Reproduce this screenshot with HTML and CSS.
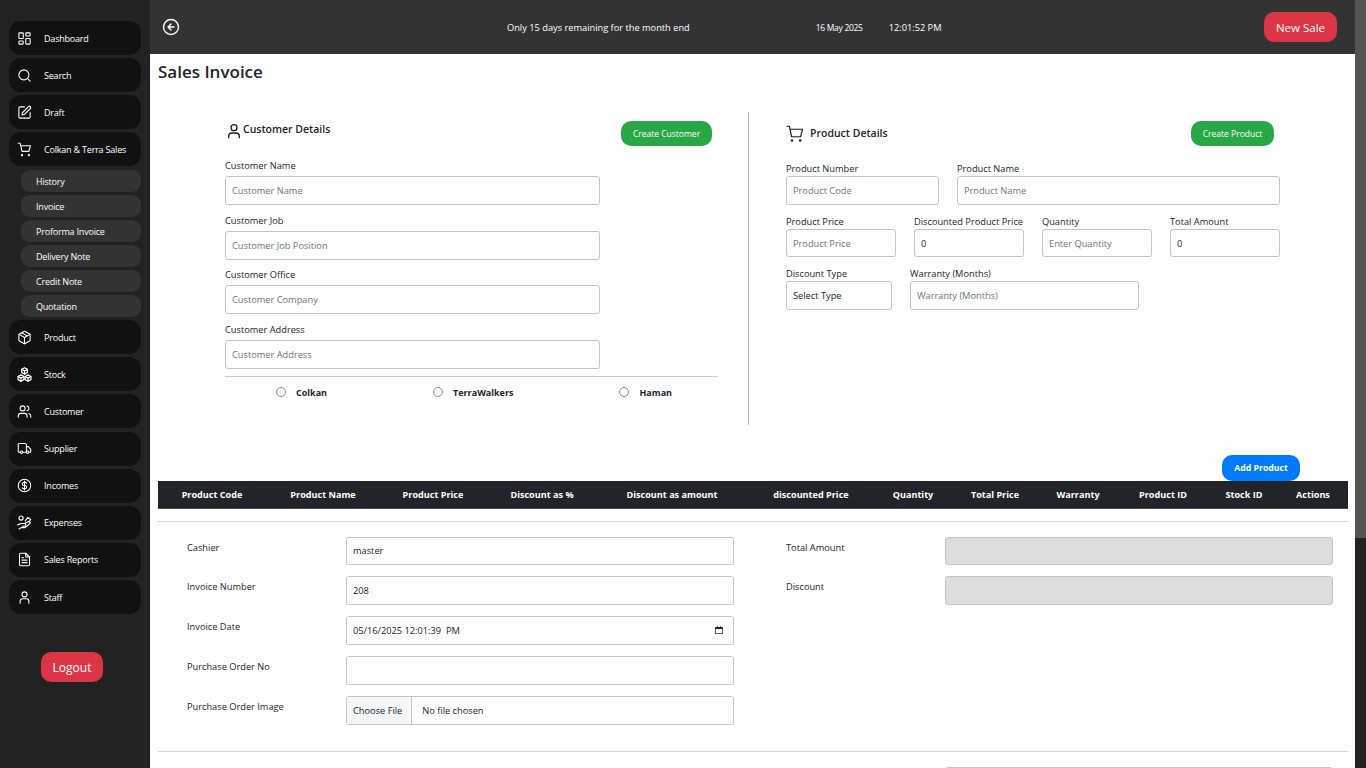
FILE: index.html
```html
<!DOCTYPE html>
<html lang="en">
<head>
    <meta charset="UTF-8">
    <meta name="viewport" content="width=device-width, initial-scale=1.0">
    <title>Sales Invoice</title>
    <link rel="stylesheet" href="styles.css">
</head>
<body>
    <div class="app">
        <aside class="sidebar">
            <nav class="menu">
                <a class="menu-item"><svg class="icon" viewBox="0 0 24 24"><rect x="3" y="3" width="7" height="9" rx="1"/><rect x="14" y="3" width="7" height="5" rx="1"/><rect x="14" y="12" width="7" height="9" rx="1"/><rect x="3" y="16" width="7" height="5" rx="1"/></svg>Dashboard</a>
                <a class="menu-item"><svg class="icon" viewBox="0 0 24 24"><circle cx="11" cy="11" r="8"/><path d="M21 21l-4.300-4.300"/></svg>Search</a>
                <a class="menu-item"><svg class="icon" viewBox="0 0 24 24"><path d="M12 3H5a2 2 0 0 0-2 2v14a2 2 0 0 0 2 2h14a2 2 0 0 0 2-2v-7"/><path d="M18.400 2.600a2.100 2.100 0 0 1 3 3L12 15l-4 1 1-4z"/></svg>Draft</a>
                <a class="menu-item"><svg class="icon" viewBox="0 0 24 24"><circle cx="8" cy="21" r="1"/><circle cx="19" cy="21" r="1"/><path d="M2 2h3l3 13h11l2.500-9H6"/></svg>Colkan &amp; Terra Sales</a>
                <div class="submenu">
                    <a class="submenu-item">History</a>
                    <a class="submenu-item">Invoice</a>
                    <a class="submenu-item">Proforma Invoice</a>
                    <a class="submenu-item">Delivery Note</a>
                    <a class="submenu-item">Credit Note</a>
                    <a class="submenu-item">Quotation</a>
                </div>
                <a class="menu-item"><svg class="icon" viewBox="0 0 24 24"><path d="M21 8a2 2 0 0 0-1-1.700l-7-4a2 2 0 0 0-2 0l-7 4A2 2 0 0 0 3 8v8a2 2 0 0 0 1 1.700l7 4a2 2 0 0 0 2 0l7-4a2 2 0 0 0 1-1.700z"/><path d="M3.300 7L12 12l8.700-5M12 22V12M7.500 4.300l9 5.200"/></svg>Product</a>
                <a class="menu-item"><svg class="icon" viewBox="2 1 20 21"><path d="M12 2l4 2.300v4.400L12 11 8 8.700V4.300zM7 12l4 2.300v4.400L7 21l-4-2.300v-4.400zM17 12l4 2.300v4.400L17 21l-4-2.300v-4.400z"/><path d="M8 4.300l4 2.300 4-2.300M12 6.600V11M3 14.300l4 2.300 4-2.300M7 16.600V21M13 14.300l4 2.300 4-2.300M17 16.600V21"/></svg>Stock</a>
                <a class="menu-item"><svg class="icon" viewBox="0 0 24 24"><circle cx="9" cy="7" r="4"/><path d="M2 21v-2a4 4 0 0 1 4-4h6a4 4 0 0 1 4 4v2M16 3.100a4 4 0 0 1 0 7.800M22 21v-2a4 4 0 0 0-3-3.900"/></svg>Customer</a>
                <a class="menu-item"><svg class="icon" viewBox="0 0 24 24"><path d="M5 18H3a1 1 0 0 1-1-1V6a2 2 0 0 1 2-2h9a2 2 0 0 1 2 2v12M9 18h6M15 9h3l4 4.500V17a1 1 0 0 1-1 1h-2"/><circle cx="7" cy="18" r="2"/><circle cx="17" cy="18" r="2"/></svg>Supplier</a>
                <a class="menu-item"><svg class="icon" viewBox="0 0 24 24"><circle cx="12" cy="12" r="10"/><path d="M15.500 8.500A2.500 2.500 0 0 0 13 7h-2a2.500 2.500 0 0 0 0 5h2a2.500 2.500 0 0 1 0 5h-2a2.500 2.500 0 0 1-2.500-1.500M12 5v14"/></svg>Incomes</a>
                <a class="menu-item"><svg class="icon" viewBox="1 1 22 21"><circle cx="7" cy="5" r="3"/><path d="M2 15l5-2h5a2 2 0 0 1 0 4H9M12 13l6-3a2 2 0 0 1 2 3l-7 6H7l-3 2"/><path d="M13 9l4-5 4 3-2 3"/></svg>Expenses</a>
                <a class="menu-item"><svg class="icon" viewBox="0 0 24 24"><path d="M14 2H6a2 2 0 0 0-2 2v16a2 2 0 0 0 2 2h12a2 2 0 0 0 2-2V8z"/><path d="M14 2v6h6M8 13h8M8 17h8M8 9h2"/></svg>Sales Reports</a>
                <a class="menu-item"><svg class="icon" viewBox="0 0 24 24"><circle cx="12" cy="7" r="4"/><path d="M5 21v-3a4 4 0 0 1 4-4h6a4 4 0 0 1 4 4v3"/></svg>Staff</a>
            </nav>
            <button class="logout-btn" type="button">Logout</button>
        </aside>

        <main class="main">
            <header class="topbar">
                <svg class="back-icon" viewBox="0 0 24 24"><circle cx="12" cy="12" r="10"/><path d="M12 8l-4 4 4 4M16 12H8"/></svg>
                <span class="notice">Only 15 days remaining for the month end</span>
                <span class="date">16 May 2025</span>
                <span class="time">12:01:52 PM</span>
                <button class="new-sale-btn" type="button">New Sale</button>
            </header>

            <div class="page">
                <h1>Sales Invoice</h1>

                <div class="details">
                    <section class="customer">
                        <div class="customer-head">
                            <h2 class="customer-title"><svg class="head-icon" viewBox="0 0 24 24"><circle cx="12" cy="7" r="4.500"/><path d="M4 23v-3a5 5 0 0 1 5-5h6a5 5 0 0 1 5 5v3"/></svg>Customer Details</h2>
                            <button class="btn-green create-customer" type="button">Create Customer</button>
                        </div>
                        <div class="field-list">
                            <div class="field"><label>Customer Name</label><input type="text" placeholder="Customer Name"></div>
                            <div class="field"><label>Customer Job</label><input type="text" placeholder="Customer Job Position"></div>
                            <div class="field"><label>Customer Office</label><input type="text" placeholder="Customer Company"></div>
                            <div class="field"><label>Customer Address</label><input type="text" placeholder="Customer Address"></div>
                        </div>
                        <hr class="customer-line">
                        <div class="radio-row">
                            <label class="radio radio-colkan"><input type="radio" name="company">Colkan</label>
                            <label class="radio radio-next"><input type="radio" name="company">TerraWalkers</label>
                            <label class="radio radio-next"><input type="radio" name="company">Haman</label>
                        </div>
                    </section>

                    <section class="product">
                        <div class="product-head">
                            <h2 class="product-title"><svg class="cart-icon" viewBox="0 0 24 24"><circle cx="8" cy="22" r="1"/><circle cx="19" cy="22" r="1"/><path d="M1 3h3.500l3 14h12l2.500-10H5.500"/></svg>Product Details</h2>
                            <button class="btn-green create-product" type="button">Create Product</button>
                        </div>
                        <div class="row row-first">
                            <div class="field w-153"><label>Product Number</label><input type="text" placeholder="Product Code"></div>
                            <div class="field w-323"><label>Product Name</label><input type="text" placeholder="Product Name"></div>
                        </div>
                        <div class="row row-short">
                            <div class="field w-110"><label>Product Price</label><input type="text" placeholder="Product Price"></div>
                            <div class="field w-110"><label>Discounted Product Price</label><input type="text" value="0"></div>
                            <div class="field w-110"><label>Quantity</label><input type="text" placeholder="Enter Quantity"></div>
                            <div class="field w-110"><label>Total Amount</label><input type="text" value="0"></div>
                        </div>
                        <div class="row">
                            <div class="field w-106"><label>Discount Type</label><select><option>Select Type</option></select></div>
                            <div class="field w-229"><label>Warranty (Months)</label><input type="text" placeholder="Warranty (Months)"></div>
                        </div>
                    </section>
                </div>

                <div class="add-row"><button class="add-btn" type="button">Add Product</button></div>

                <table class="items">
                    <thead>
                        <tr>
                            <th class="c1">Product Code</th>
                            <th class="c2">Product Name</th>
                            <th class="c3">Product Price</th>
                            <th class="c4">Discount as %</th>
                            <th class="c5">Discount as amount</th>
                            <th class="c6">discounted Price</th>
                            <th class="c7">Quantity</th>
                            <th class="c8">Total Price</th>
                            <th class="c9">Warranty</th>
                            <th class="c10">Product ID</th>
                            <th class="c11">Stock ID</th>
                            <th class="c12">Actions</th>
                        </tr>
                    </thead>
                </table>

                <hr class="line line-top">

                <div class="summary">
                    <div class="summary-col summary-left">
                        <div class="form-row"><label>Cashier</label><input type="text" value="master"></div>
                        <div class="form-row"><label>Invoice Number</label><input type="text" value="208"></div>
                        <div class="form-row">
                            <label>Invoice Date</label>
                            <div class="date-box">
                                <input type="text" value="05/16/2025 12:01:39  PM">
                                <svg class="calendar-icon" viewBox="0 0 16 16"><path d="M4 0h1.500v2h5V0H12v2h2.500A1.500 1.500 0 0 1 16 3.500v11a1.500 1.500 0 0 1-1.500 1.500h-13A1.500 1.500 0 0 1 0 14.500v-11A1.500 1.500 0 0 1 1.500 2H4zM1.500 6v8.500h13V6z"/></svg>
                            </div>
                        </div>
                        <div class="form-row"><label>Purchase Order No</label><input type="text"></div>
                        <div class="form-row"><label>Purchase Order Image</label><input type="file"></div>
                    </div>
                    <div class="summary-col">
                        <div class="form-row"><label>Total Amount</label><input class="readonly" type="text" readonly></div>
                        <div class="form-row"><label>Discount</label><input class="readonly" type="text" readonly></div>
                    </div>
                </div>

                <hr class="line line-bottom">

                <div class="summary">
                    <div class="summary-col summary-left"></div>
                    <div class="summary-col">
                        <div class="form-row"><label></label><input class="readonly" type="text" readonly></div>
                    </div>
                </div>
            </div>
        </main>

        <div class="scrollbar"><div class="scroll-thumb"></div></div>
    </div>
</body>
</html>
```

FILE: styles.css
```css
* {
    box-sizing: border-box;
}
html, body {
    height: 100%;
    margin: 0;
    overflow: hidden;
}
body {
    font-family: "Open Sans", "Noto Sans", sans-serif;
    font-size: 9.25px;
    color: #212529;
    background-color: #fff;
}
.app {
    display: flex;
    height: 768px;
}

/* sidebar */
.sidebar {
    width: 150px;
    flex-shrink: 0;
    padding: 21px 9px 0;
    display: flex;
    flex-direction: column;
    background-color: #222;
}
.menu {
    display: flex;
    flex-direction: column;
    gap: 3.13px;
    font-size: 9px;
    letter-spacing: -0.2px;
}
.menu-item {
    height: 34px;
    padding-left: 8px;
    display: flex;
    align-items: center;
    gap: 12px;
    color: #fff;
    background-color: #111;
    border-radius: 12px;
}
.icon {
    width: 15px;
    height: 15px;
    flex-shrink: 0;
    fill: none;
    stroke: #fff;
    stroke-width: 1.7;
    stroke-linecap: round;
    stroke-linejoin: round;
}
.submenu {
    margin-top: 0.5px;
    padding-left: 12px;
    display: flex;
    flex-direction: column;
    gap: 3px;
}
.submenu-item {
    height: 22px;
    padding-left: 15px;
    display: flex;
    align-items: center;
    color: #fff;
    background-color: #333;
    border-radius: 9px;
}
.logout-btn {
    width: 62px;
    height: 30px;
    margin: 38px 0 0 32px;
    padding: 0;
    font: inherit;
    font-size: 12px;
    color: #fff;
    background-color: #dc3545;
    border: none;
    border-radius: 10px;
}

/* main area */
.main {
    flex: 1;
    min-width: 0;
    height: 768px;
    overflow: hidden;
}
.scrollbar {
    width: 11px;
    flex-shrink: 0;
    background-color: #222;
}
.scroll-thumb {
    height: 538px;
    background-color: #555;
}
.topbar {
    height: 54px;
    padding: 0 18px 0 12px;
    display: flex;
    align-items: center;
    color: #fff;
    background-color: #333;
}
.back-icon {
    width: 18px;
    height: 18px;
    flex-shrink: 0;
    fill: none;
    stroke: #fff;
    stroke-width: 1.8;
    stroke-linecap: round;
    stroke-linejoin: round;
}
.notice {
    margin-left: 327px;
}
.date {
    margin-left: 126px;
    font-size: 8.5px;
    letter-spacing: -0.3px;
}
.time {
    margin-left: 26px;
}
.new-sale-btn {
    width: 73px;
    height: 30px;
    margin-left: auto;
    padding: 0;
    font: inherit;
    font-size: 11.5px;
    color: #fff;
    background-color: #dc3545;
    border: none;
    border-radius: 10px;
}
.page {
    padding: 0 7px 0 8px;
}
h1 {
    height: 58px;
    margin: 0;
    padding-top: 6px;
    font-size: 17px;
    font-weight: 600;
    line-height: 24px;
}

/* customer and product details */
.details {
    display: flex;
    height: 313px;
}
.customer {
    width: 591px;
    padding: 9px 0 0 67px;
    border-right: 1px solid #bbb;
}
.customer-head {
    width: 487px;
    height: 25px;
    display: flex;
    justify-content: space-between;
}
.customer-title {
    margin: 0;
    display: flex;
    align-items: center;
    height: 16px;
    padding-left: 1px;
    font-size: 10.5px;
    font-weight: 600;
}
.head-icon {
    width: 16px;
    height: 16px;
    margin: 4px 1px 0 0;
    fill: none;
    stroke: #222;
    stroke-width: 2;
}
.btn-green {
    height: 25px;
    padding: 0;
    font: inherit;
    font-size: 8.5px;
    color: #fff;
    background-color: #28a745;
    border: none;
    border-radius: 10px;
}
.create-customer {
    width: 91px;
}
.create-product {
    width: 83px;
}
.field-list {
    width: 375px;
    margin-top: 13px;
    display: flex;
    flex-direction: column;
    gap: 8.5px;
}
.field label {
    display: block;
    height: 14px;
    margin-bottom: 3px;
    line-height: 14px;
    white-space: nowrap;
}
input, select {
    width: 100%;
    height: 29px;
    padding: 0 6px;
    font: inherit;
    color: #212529;
    background-color: #fff;
    border: 1px solid #c4c4c4;
    border-radius: 3px;
    outline: none;
    appearance: none;
}
input::placeholder {
    color: #6c757d;
}
.customer-line {
    width: 493px;
    margin: 7px 0 0;
    border: none;
    border-top: 1px solid #ccc;
}
.radio-row {
    height: 30px;
    display: flex;
}
.radio {
    margin-top: 9px;
    display: flex;
    align-items: center;
    height: 13px;
    font-size: 9px;
    font-weight: 700;
}
.radio input {
    width: 10px;
    height: 10px;
    margin: 0 10px 0 0;
    padding: 0;
    border: 1px solid #888;
    border-radius: 50%;
}
.radio-colkan {
    margin-left: 51px;
}
.radio-next {
    margin-left: 106px;
}
.product {
    flex: 1;
    padding: 9px 0 0 37px;
}
.product .field label {
    margin-bottom: 0;
}
.product-head {
    width: 488px;
    height: 25px;
    display: flex;
    justify-content: space-between;
}
.product-title {
    margin: 0;
    height: 23px;
    display: flex;
    align-items: center;
    gap: 6px;
    font-size: 10.5px;
    font-weight: 600;
}
.cart-icon {
    width: 18px;
    height: 18px;
    fill: none;
    stroke: #222;
    stroke-width: 1.6;
    stroke-linecap: round;
    stroke-linejoin: round;
}
.row {
    margin-top: 10px;
    display: flex;
    gap: 18px;
}
.row-first {
    margin-top: 16px;
}
.row-short input {
    height: 28px;
}
.w-153 {
    width: 153px;
}
.w-323 {
    width: 323px;
}
.w-110 {
    width: 110px;
}
.w-106 {
    width: 106px;
}
.w-229 {
    width: 229px;
}

/* table */
.add-row {
    margin-top: 30px;
    padding-right: 48px;
    display: flex;
    justify-content: flex-end;
}
.add-btn {
    width: 78px;
    height: 26px;
    padding: 0;
    font: inherit;
    font-size: 8.7px;
    font-weight: 700;
    color: #fff;
    background-color: #007bff;
    border: none;
    border-radius: 10px;
}
.items {
    width: 1190px;
    table-layout: fixed;
    border-collapse: collapse;
}
.items th {
    height: 27px;
    padding: 0;
    font-size: 9.1px;
    font-weight: 700;
    color: #fff;
    text-align: center;
    background-color: #212529;
    border-bottom: 1px solid #454d55;
}
.c1 { width: 108px; }
.c2 { width: 114px; }
.c3 { width: 106px; }
.c4 { width: 112px; }
.c5 { width: 148px; }
.c6 { width: 130px; }
.c7 { width: 74px; }
.c8 { width: 90px; }
.c9 { width: 76px; }
.c10 { width: 94px; }
.c11 { width: 68px; }
.c12 { width: 70px; }
.line {
    width: 1190px;
    margin: 0;
    border: none;
    border-top: 1px solid #d5d5d5;
}
.line-top {
    margin: 12px 0 15px;
}
.line-bottom {
    margin: 26px 0 15px;
}

/* summary form */
.summary {
    display: flex;
}
.summary-col {
    display: flex;
    flex-direction: column;
    gap: 11px;
}
.summary-left {
    width: 628px;
    padding-left: 29px;
}
.form-row {
    display: flex;
}
.form-row label {
    width: 159px;
    padding-top: 4px;
    line-height: 14px;
}
.form-row input {
    width: 388px;
}
.form-row:first-child input {
    height: 28px;
}
.form-row .readonly {
    background-color: #ddd;
}
.date-box {
    width: 388px;
    height: 29px;
    padding-right: 10px;
    display: flex;
    align-items: center;
    border: 1px solid #c4c4c4;
    border-radius: 3px;
}
.date-box input {
    flex: 1;
    height: 27px;
    border: none;
    white-space: pre;
}
.calendar-icon {
    width: 8px;
    height: 8px;
    flex-shrink: 0;
    fill: #212529;
}
input[type="file"] {
    padding: 0;
    line-height: 27px;
}
input[type="file"]::file-selector-button {
    height: 27px;
    margin: 0 10px 0 0;
    padding: 0 9px 0 6px;
    font: inherit;
    color: #212529;
    background-color: #f5f6f7;
    border: none;
    border-right: 1px solid #c4c4c4;
}
```
